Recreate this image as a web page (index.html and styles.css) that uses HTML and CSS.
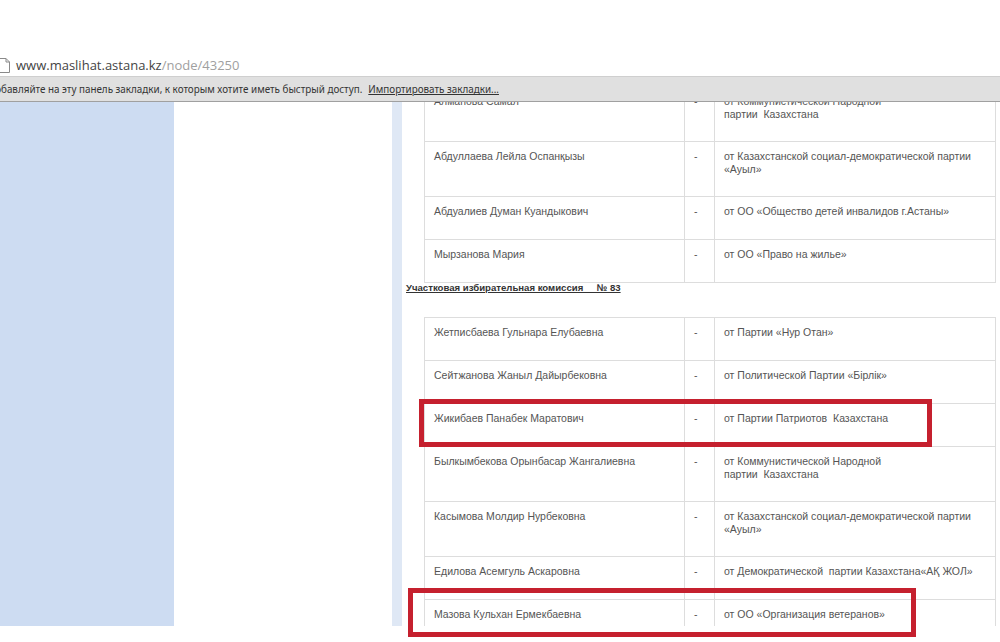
FILE: index.html
```html
<!DOCTYPE html>
<html lang="ru">
<head>
    <meta charset="UTF-8">
    <meta name="viewport" content="width=device-width, initial-scale=1.0">
    <title>www.maslihat.astana.kz/node/43250</title>
    <link rel="stylesheet" href="styles.css">
</head>
<body>
    <div class="address-row">
        <svg class="page-icon" width="11" height="15" viewBox="0 0 11 15">
            <path d="M0.5 0.5H7L10.5 4V14.5H0.5Z M7 0.5V4H10.5" fill="#fff" stroke="#8a8a8a"/>
        </svg>
        <span class="url-host">www.maslihat.astana.kz</span><span class="url-path">/node/43250</span>
    </div>
    <div class="bookmarks-bar">
        <span class="bookmarks-hint">Добавляйте на эту панель закладки, к которым хотите иметь быстрый доступ.</span>
        <a class="bookmarks-import" href="#">Импортировать закладки...</a>
    </div>

    <div class="main">
        <div class="sidebar"></div>
        <div class="strip"></div>
        <div class="content">
            <table class="commission">
                <tr class="double">
                    <td class="name">Алманова Самал</td>
                    <td class="dash">-</td>
                    <td class="party">от Коммунистической Народной<br>партии&nbsp; Казахстана</td>
                </tr>
                <tr class="double">
                    <td class="name">Абдуллаева Лейла Оспанқызы</td>
                    <td class="dash">-</td>
                    <td class="party">от Казахстанской социал-демократической партии<br>«Ауыл»</td>
                </tr>
                <tr class="single">
                    <td class="name">Абдуалиев Думан Куандыкович</td>
                    <td class="dash">-</td>
                    <td class="party">от ОО «Общество детей инвалидов г.Астаны»</td>
                </tr>
                <tr class="single">
                    <td class="name">Мырзанова Мария</td>
                    <td class="dash">-</td>
                    <td class="party">от ОО «Право на жилье»</td>
                </tr>
            </table>

            <h4 class="commission-title">Участковая избирательная комиссия&nbsp;&nbsp;&nbsp;&nbsp; № 83</h4>

            <table class="commission">
                <tr class="single">
                    <td class="name">Жетписбаева Гульнара Елубаевна</td>
                    <td class="dash">-</td>
                    <td class="party">от Партии «Нур Отан»</td>
                </tr>
                <tr class="single">
                    <td class="name">Сейтжанова Жаныл Дайырбековна</td>
                    <td class="dash">-</td>
                    <td class="party">от Политической Партии «Бірлік»</td>
                </tr>
                <tr class="single">
                    <td class="name">Жикибаев Панабек Маратович</td>
                    <td class="dash">-</td>
                    <td class="party">от Партии Патриотов&nbsp; Казахстана</td>
                </tr>
                <tr class="double">
                    <td class="name">Былкымбекова Орынбасар Жангалиевна</td>
                    <td class="dash">-</td>
                    <td class="party">от Коммунистической Народной<br>партии&nbsp; Казахстана</td>
                </tr>
                <tr class="double">
                    <td class="name">Касымова Молдир Нурбековна</td>
                    <td class="dash">-</td>
                    <td class="party">от Казахстанской социал-демократической партии<br>«Ауыл»</td>
                </tr>
                <tr class="single">
                    <td class="name">Едилова Асемгуль Аскаровна</td>
                    <td class="dash">-</td>
                    <td class="party">от Демократической&nbsp; партии Казахстана«АҚ ЖОЛ»</td>
                </tr>
                <tr class="single">
                    <td class="name">Мазова Кульхан Ермекбаевна</td>
                    <td class="dash">-</td>
                    <td class="party">от ОО «Организация ветеранов»</td>
                </tr>
            </table>
        </div>
    </div>

    <!-- red marks drawn over the screenshot -->
    <div class="mark mark-first"></div>
    <div class="mark mark-second"></div>
</body>
</html>
```

FILE: styles.css
```css
* {
    margin: 0;
    padding: 0;
    box-sizing: border-box;
}
html, body {
    height: 642px;
    overflow: hidden;
}
body {
    position: relative;
    background: #fff;
    font-family: "Liberation Sans", Arial, sans-serif;
}
.address-row {
    height: 76px;
    padding-top: 55px;
    display: flex;
    align-items: flex-start;
    font-family: "Open Sans", sans-serif;
    font-size: 13px;
    line-height: 20px;
}
.page-icon {
    margin: 3px 6px 0 -1px;
}
.url-host {
    color: #444;
}
.url-path {
    color: #a0a0a0;
}
.bookmarks-bar {
    height: 26px;
    background: #e0e0e0;
    border-top: 1px solid #cfcfcf;
    border-bottom: 1px solid #a0a0a0;
    display: flex;
    gap: 6px;
    font-family: "Noto Sans", sans-serif;
    font-size: 9.85px;
    line-height: 24px;
    color: #333;
    white-space: nowrap;
}
.bookmarks-hint {
    margin-left: -12px;
}
.bookmarks-import {
    color: #333;
}
.main {
    height: 524px;
    display: flex;
    overflow: hidden;
}
.sidebar {
    width: 174px;
    background: #cddcf2;
}
.strip {
    width: 10px;
    margin-left: 218px;
    background: #dfe8f5;
}
.content {
    margin-top: -16px;
    padding-left: 4px;
}
.commission {
    margin-left: 18px;
    width: 572px;
    border-collapse: collapse;
    table-layout: fixed;
    font-size: 10.5px;
    line-height: 12.5px;
    color: #555;
}
.commission td {
    border: 1px solid #ddd;
    padding: 8px 9px 0;
    vertical-align: top;
}
.single td {
    height: 43px;
}
.double td {
    height: 55px;
}
.name {
    width: 260px;
}
.dash {
    width: 30px;
}
.commission-title {
    height: 35px;
    margin-top: -1px;
    font-size: 9.6px;
    line-height: 12px;
    color: #333;
    text-decoration: underline;
}
.mark {
    position: absolute;
    border: 5px solid #c5202e;
}
.mark-first {
    left: 419px;
    top: 399px;
    width: 513px;
    height: 48px;
}
.mark-second {
    left: 408px;
    top: 588px;
    width: 508px;
    height: 49px;
}
```
